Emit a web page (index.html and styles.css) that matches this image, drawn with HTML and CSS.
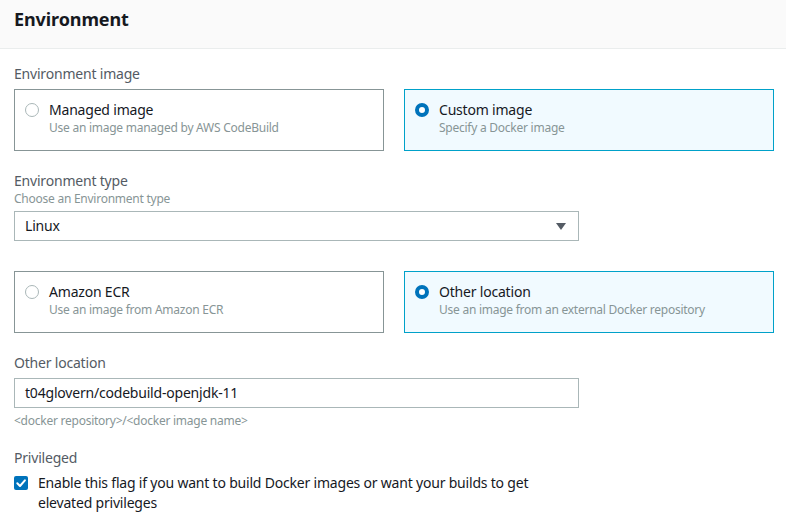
FILE: index.html
```html
<!DOCTYPE html>
<html lang="en">
<head>
<meta charset="utf-8">
<title>Environment</title>
<link rel="stylesheet" href="styles.css">
</head>
<body>
<div class="panel">
  <div class="panel-header"><h2>Environment</h2></div>
  <div class="panel-body">
    <div class="field-label first">Environment image</div>
    <div class="tiles">
      <div class="tile">
        <span class="radio"></span>
        <div class="tile-text">
          <div class="tile-title">Managed image</div>
          <div class="tile-desc">Use an image managed by AWS CodeBuild</div>
        </div>
      </div>
      <div class="tile selected">
        <span class="radio checked"></span>
        <div class="tile-text">
          <div class="tile-title">Custom image</div>
          <div class="tile-desc">Specify a Docker image</div>
        </div>
      </div>
    </div>

    <div class="field-label gap20">Environment type</div>
    <div class="field-desc">Choose an Environment type</div>
    <div class="select">
      <span>Linux</span>
      <svg class="caret" width="10" height="7" viewBox="0 0 10 7"><path d="M0 0 H10 L5 7 Z" fill="#545b64"/></svg>
    </div>

    <div class="tiles gap30">
      <div class="tile">
        <span class="radio"></span>
        <div class="tile-text">
          <div class="tile-title">Amazon ECR</div>
          <div class="tile-desc">Use an image from Amazon ECR</div>
        </div>
      </div>
      <div class="tile selected">
        <span class="radio checked"></span>
        <div class="tile-text">
          <div class="tile-title">Other location</div>
          <div class="tile-desc">Use an image from an external Docker repository</div>
        </div>
      </div>
    </div>

    <div class="field-label gap20">Other location</div>
    <div class="input">t04glovern/codebuild-openjdk-11</div>
    <div class="field-hint">&lt;docker repository&gt;/&lt;docker image name&gt;</div>

    <div class="field-label gap19">Privileged</div>
    <div class="check-row">
      <span class="checkbox">
        <svg width="14" height="14" viewBox="0 0 14 14"><path d="M3.3 7.3 L6 10 L10.9 4.3" fill="none" stroke="#fff" stroke-width="2" stroke-linecap="round" stroke-linejoin="round"/></svg>
      </span>
      <div class="check-text">Enable this flag if you want to build Docker images or want your builds to get elevated privileges</div>
    </div>
  </div>
</div>
</body>
</html>
```
FILE: styles.css
```css
* { box-sizing: border-box; }
html, body { margin: 0; padding: 0; background: #fff; }
body {
  font-family: "Noto Sans", "Open Sans", sans-serif;
  font-size: 14px;
  line-height: 20px;
  letter-spacing: -0.2px;
  color: #16191f;
}
.panel-header {
  background: #fafafa;
  border-bottom: 1px solid #eaeded;
  padding: 8px 14px 17px;
  height: 49px;
}
.panel-header h2 {
  margin: 0;
  font-size: 18px;
  line-height: 22px;
  font-weight: 700;
  letter-spacing: -0.1px;
  color: #16191f;
}
.panel-body {
  padding: 0 12px 0 14px;
}
.field-label {
  color: #545b64;
  font-size: 14px;
  line-height: 20px;
}
.field-label.first { margin-top: 15px; }
.gap20 { margin-top: 20px; }
.gap19 { margin-top: 19px; }
.gap30 { margin-top: 30px !important; }
.tiles {
  display: grid;
  grid-template-columns: 370px 370px;
  column-gap: 20px;
  margin-top: 5px;
}
.tile {
  height: 62px;
  border: 1px solid #879596;
  padding: 10px 10px 0;
  display: flex;
  align-items: flex-start;
  gap: 10px;
}
.tile.selected {
  border-color: #00a1c9;
  background: #f1faff;
}
.radio {
  flex: none;
  width: 14px;
  height: 14px;
  margin-top: 3px;
  border-radius: 50%;
  border: 1px solid #aab7b8;
  background: #fff;
}
.radio.checked {
  border: 4px solid #0073bb;
  background: #fff;
}
.tile-title {
  font-size: 14px;
  line-height: 20px;
  color: #16191f;
}
.tile-desc, .field-desc, .field-hint {
  font-size: 12px;
  line-height: 16px;
  letter-spacing: -0.25px;
  color: #879596;
}
.select, .input {
  width: 565px;
  height: 30px;
  border: 1px solid #aab7b8;
  padding: 0 11px 0 10px;
  display: flex;
  align-items: center;
  justify-content: space-between;
  color: #16191f;
  font-size: 14px;
  margin-top: 4px;
}
.input { margin-top: 5px; }
.caret { display: block; margin-right: 1px; }
.field-hint { margin-top: 5px; }
.check-row {
  display: flex;
  gap: 10px;
  margin-top: 5px;
  width: 540px;
}
.checkbox {
  flex: none;
  width: 14px;
  height: 14px;
  margin-top: 3px;
  border-radius: 2px;
  background: #0073bb;
  display: flex;
  align-items: center;
  justify-content: center;
}
.checkbox svg { width: 14px; height: 14px; }
.check-text { color: #16191f; }
```
